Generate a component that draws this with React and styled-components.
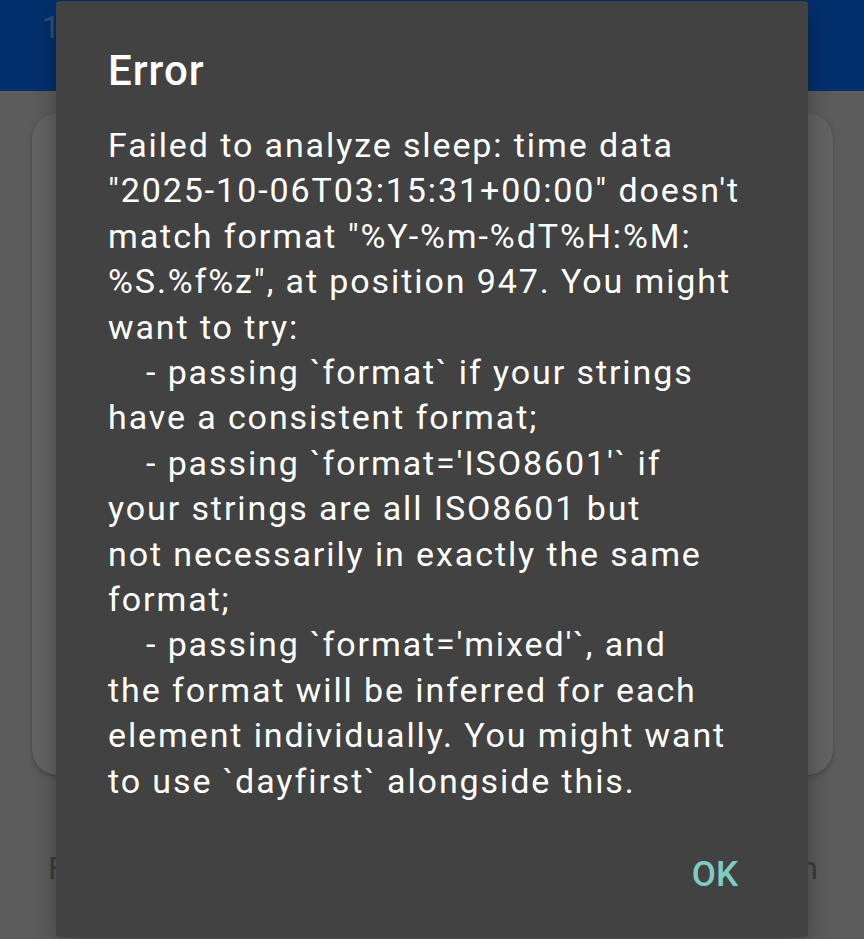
import React from 'react';
import styled, { createGlobalStyle } from 'styled-components';

const GlobalStyle = createGlobalStyle`
  html, body {
    margin: 0;
    padding: 0;
    background: #5c5c5c;
  }
  body {
    font-family: Roboto, "Noto Sans", sans-serif;
  }
`;

const colors = {
  bar: '#02306c',
  screen: '#5c5c5c',
  card: '#636363',
  dialog: '#424242',
  text: '#ffffff',
  accent: '#80cbc4',
  muted: '#3c3c3c',
};

const Screen = styled.div`
  position: relative;
  width: 864px;
  height: 939px;
  overflow: hidden;
  display: flex;
  flex-direction: column;
  background: ${colors.screen};
`;

const AppBar = styled.div`
  height: 91px;
  flex-shrink: 0;
  background: ${colors.bar};
  display: flex;
  align-items: flex-start;
  padding: 8px 0 0 42px;
  box-sizing: border-box;
  color: #3a4d70;
  font-size: 32px;
`;

const Body = styled.div`
  flex: 1;
  display: flex;
  flex-direction: column;
  padding: 22px 31px 0 32px;
`;

const Card = styled.div`
  height: 662px;
  background: ${colors.card};
  border-radius: 26px;
  box-shadow: 0 2px 4px rgba(0, 0, 0, 0.25);
`;

const FooterRow = styled.div`
  display: flex;
  justify-content: space-between;
  padding: 74px 15px 0 16px;
  font-size: 32px;
  color: ${colors.muted};
`;

const Dialog = styled.div`
  position: absolute;
  left: 56px;
  top: 1px;
  width: 752px;
  height: 936px;
  background: ${colors.dialog};
  border-radius: 4px;
  box-shadow: 0 8px 24px rgba(0, 0, 0, 0.3);
  box-sizing: border-box;
  padding: 42px 52px 0 52px;
  display: flex;
  flex-direction: column;
`;

const Title = styled.div`
  color: ${colors.text};
  font-size: 42px;
  font-weight: 500;
  line-height: 56px;
  letter-spacing: 1px;
`;

const Message = styled.div`
  margin-top: 24px;
  color: ${colors.text};
  font-size: 34px;
  line-height: 45.4px;
  letter-spacing: 1.9px;
  white-space: pre;
`;

const Line = styled.div`
  padding-left: ${(p) => (p.indent ? '38px' : '0')};
`;

const Actions = styled.div`
  display: flex;
  justify-content: flex-end;
  padding-top: 47px;
`;

const Button = styled.button`
  background: none;
  border: none;
  padding: 0 18px;
  font-family: inherit;
  font-size: 35px;
  font-weight: 500;
  color: ${colors.accent};
  line-height: 48px;
`;

const lines = [
  ['Failed to analyze sleep: time data'],
  ['"2025-10-06T03:15:31+00:00" doesn\'t'],
  ['match format "%Y-%m-%dT%H:%M:'],
  ['%S.%f%z", at position 947. You might'],
  ['want to try:'],
  ['- passing `format` if your strings', true],
  ['have a consistent format;'],
  ["- passing `format='ISO8601'` if", true],
  ['your strings are all ISO8601 but'],
  ['not necessarily in exactly the same'],
  ['format;'],
  ["- passing `format='mixed'`, and", true],
  ['the format will be inferred for each'],
  ['element individually. You might want'],
  ['to use `dayfirst` alongside this.'],
];

const App = () => (
  <>
    <GlobalStyle />
    <Screen>
      <AppBar>1</AppBar>
      <Body>
        <Card />
        <FooterRow>
          <span>Fri</span>
          <span>Mon</span>
        </FooterRow>
      </Body>
      <Dialog>
        <Title>Error</Title>
        <Message>
          {lines.map(([text, indent], i) => (
            <Line key={i} indent={indent}>{text}</Line>
          ))}
        </Message>
        <Actions>
          <Button>OK</Button>
        </Actions>
      </Dialog>
    </Screen>
  </>
);

export default App;
